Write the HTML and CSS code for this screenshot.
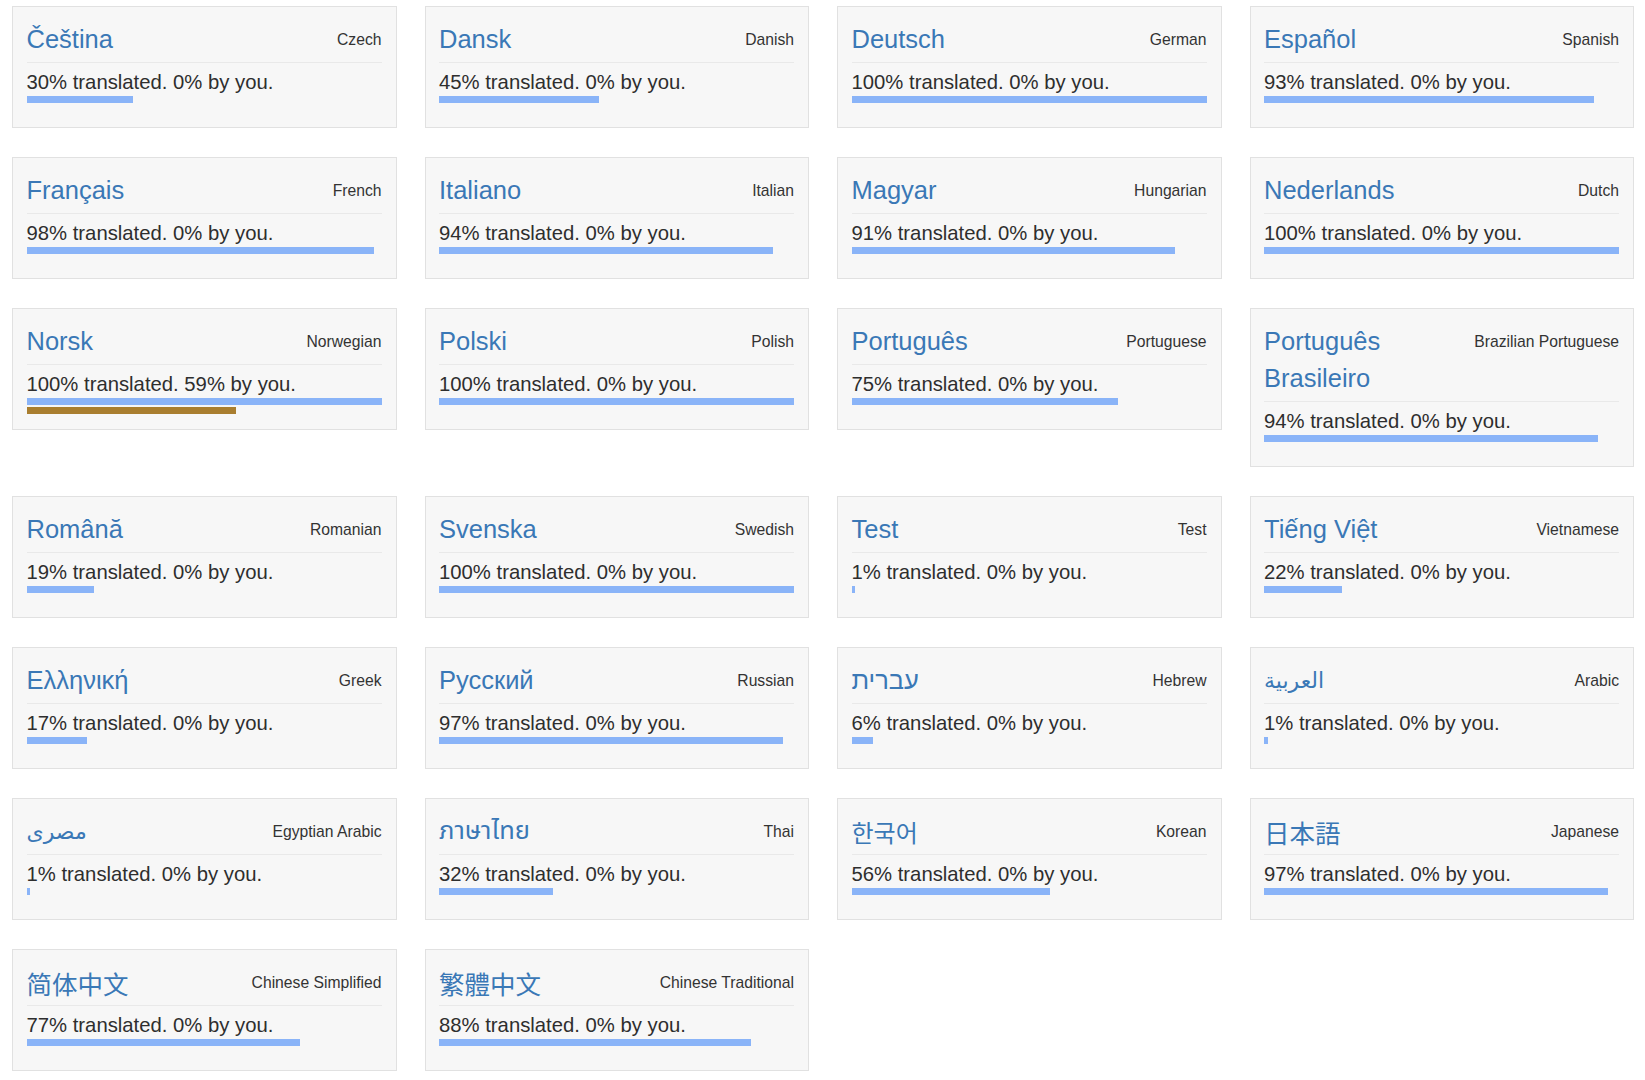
FILE: index.html
```html
<!DOCTYPE html>
<html lang="en">
<head>
<meta charset="utf-8">
<title>Languages</title>
<link rel="stylesheet" href="styles.css">
</head>
<body>
<div class="grid">
  <div class="card"><div class="head"><span class="name">Čeština</span><span class="en">Czech</span></div><div class="stat">30% translated. 0% by you.</div><div class="bars"><div class="bar" style="width:30%"></div></div></div>
  <div class="card"><div class="head"><span class="name">Dansk</span><span class="en">Danish</span></div><div class="stat">45% translated. 0% by you.</div><div class="bars"><div class="bar" style="width:45%"></div></div></div>
  <div class="card"><div class="head"><span class="name">Deutsch</span><span class="en">German</span></div><div class="stat">100% translated. 0% by you.</div><div class="bars"><div class="bar" style="width:100%"></div></div></div>
  <div class="card"><div class="head"><span class="name">Español</span><span class="en">Spanish</span></div><div class="stat">93% translated. 0% by you.</div><div class="bars"><div class="bar" style="width:93%"></div></div></div>

  <div class="card"><div class="head"><span class="name">Français</span><span class="en">French</span></div><div class="stat">98% translated. 0% by you.</div><div class="bars"><div class="bar" style="width:98%"></div></div></div>
  <div class="card"><div class="head"><span class="name">Italiano</span><span class="en">Italian</span></div><div class="stat">94% translated. 0% by you.</div><div class="bars"><div class="bar" style="width:94%"></div></div></div>
  <div class="card"><div class="head"><span class="name">Magyar</span><span class="en">Hungarian</span></div><div class="stat">91% translated. 0% by you.</div><div class="bars"><div class="bar" style="width:91%"></div></div></div>
  <div class="card"><div class="head"><span class="name">Nederlands</span><span class="en">Dutch</span></div><div class="stat">100% translated. 0% by you.</div><div class="bars"><div class="bar" style="width:100%"></div></div></div>

  <div class="card"><div class="head"><span class="name">Norsk</span><span class="en">Norwegian</span></div><div class="stat">100% translated. 59% by you.</div><div class="bars"><div class="bar" style="width:100%"></div><div class="bar mine" style="width:59%"></div></div></div>
  <div class="card"><div class="head"><span class="name">Polski</span><span class="en">Polish</span></div><div class="stat">100% translated. 0% by you.</div><div class="bars"><div class="bar" style="width:100%"></div></div></div>
  <div class="card"><div class="head"><span class="name">Português</span><span class="en">Portuguese</span></div><div class="stat">75% translated. 0% by you.</div><div class="bars"><div class="bar" style="width:75%"></div></div></div>
  <div class="card"><div class="head"><span class="name">Português Brasileiro</span><span class="en">Brazilian Portuguese</span></div><div class="stat">94% translated. 0% by you.</div><div class="bars"><div class="bar" style="width:94%"></div></div></div>

  <div class="card"><div class="head"><span class="name">Română</span><span class="en">Romanian</span></div><div class="stat">19% translated. 0% by you.</div><div class="bars"><div class="bar" style="width:19%"></div></div></div>
  <div class="card"><div class="head"><span class="name">Svenska</span><span class="en">Swedish</span></div><div class="stat">100% translated. 0% by you.</div><div class="bars"><div class="bar" style="width:100%"></div></div></div>
  <div class="card"><div class="head"><span class="name">Test</span><span class="en">Test</span></div><div class="stat">1% translated. 0% by you.</div><div class="bars"><div class="bar" style="width:1%"></div></div></div>
  <div class="card"><div class="head"><span class="name">Tiếng Việt</span><span class="en">Vietnamese</span></div><div class="stat">22% translated. 0% by you.</div><div class="bars"><div class="bar" style="width:22%"></div></div></div>

  <div class="card"><div class="head"><span class="name">Ελληνική</span><span class="en">Greek</span></div><div class="stat">17% translated. 0% by you.</div><div class="bars"><div class="bar" style="width:17%"></div></div></div>
  <div class="card"><div class="head"><span class="name">Русский</span><span class="en">Russian</span></div><div class="stat">97% translated. 0% by you.</div><div class="bars"><div class="bar" style="width:97%"></div></div></div>
  <div class="card"><div class="head"><span class="name name-he" dir="rtl">עברית</span><span class="en">Hebrew</span></div><div class="stat">6% translated. 0% by you.</div><div class="bars"><div class="bar" style="width:6%"></div></div></div>
  <div class="card"><div class="head"><span class="name name-ar" dir="rtl">العربية</span><span class="en">Arabic</span></div><div class="stat">1% translated. 0% by you.</div><div class="bars"><div class="bar" style="width:1%"></div></div></div>

  <div class="card"><div class="head"><span class="name name-ar" dir="rtl">مصرى</span><span class="en">Egyptian Arabic</span></div><div class="stat">1% translated. 0% by you.</div><div class="bars"><div class="bar" style="width:1%"></div></div></div>
  <div class="card"><div class="head"><span class="name name-th">ภาษาไทย</span><span class="en">Thai</span></div><div class="stat">32% translated. 0% by you.</div><div class="bars"><div class="bar" style="width:32%"></div></div></div>
  <div class="card"><div class="head"><span class="name name-ko">한국어</span><span class="en">Korean</span></div><div class="stat">56% translated. 0% by you.</div><div class="bars"><div class="bar" style="width:56%"></div></div></div>
  <div class="card"><div class="head"><span class="name name-ja">日本語</span><span class="en">Japanese</span></div><div class="stat">97% translated. 0% by you.</div><div class="bars"><div class="bar" style="width:97%"></div></div></div>

  <div class="card"><div class="head"><span class="name name-sc">简体中文</span><span class="en">Chinese Simplified</span></div><div class="stat">77% translated. 0% by you.</div><div class="bars"><div class="bar" style="width:77%"></div></div></div>
  <div class="card"><div class="head"><span class="name name-tc">繁體中文</span><span class="en">Chinese Traditional</span></div><div class="stat">88% translated. 0% by you.</div><div class="bars"><div class="bar" style="width:88%"></div></div></div>
</div>
</body>
</html>
```

FILE: styles.css
```css
html, body {
  margin: 0;
  padding: 0;
  background: #ffffff;
}

body {
  font-family: "Liberation Sans", "DejaVu Sans", "Noto Sans", sans-serif;
  color: #333333;
}

.grid {
  display: grid;
  grid-template-columns: repeat(4, 1fr);
  column-gap: 28px;
  row-gap: 29.5px;
  align-items: start;
  padding: 6px 11px 0 12px;
}

.card {
  background: #f7f7f7;
  border: 1px solid #e1e1e1;
  padding: 14px 14px 14px 13.5px;
}

.head {
  display: flex;
  align-items: flex-start;
  justify-content: space-between;
  gap: 12px;
  height: auto;
  padding-bottom: 4px;
  border-bottom: 1px solid #e9e9e9;
}

.name {
  flex: 1 1 auto;
  min-width: 0;
  font-size: 25.5px;
  line-height: 37px;
  color: #3a78b6;
  text-align: left;
}

.name-he { font-family: "Liberation Sans", "DejaVu Sans", sans-serif; }
.name-ar { font-family: "DejaVu Sans", "Noto Sans", sans-serif; font-size: 22px; }
.name-th { font-family: "Noto Sans Thai", "Loma", "Garuda", "DejaVu Sans", sans-serif; }
.name-ko { font-family: "Noto Sans CJK KR", sans-serif; font-size: 24px; }
.name-ja { font-family: "Noto Sans CJK JP", sans-serif; font-size: 25.5px; }
.name-sc { font-family: "Noto Sans CJK SC", sans-serif; font-size: 25.5px; }
.name-tc { font-family: "Noto Sans CJK TC", sans-serif; font-size: 25.5px; }

.en {
  flex: 0 0 auto;
  white-space: nowrap;
  font-size: 15.7px;
  line-height: 36px;
  padding-top: 1px;
  color: #333333;
}

.stat {
  margin-top: 5px;
  font-size: 20.3px;
  line-height: 28px;
  color: #2e2e2e;
}

.bars {
  height: 16.5px;
}

.bar {
  height: 7px;
  background: #8ab4f8;
}

.bar.mine {
  margin-top: 1.5px;
  background: #a97e2f;
}
```
